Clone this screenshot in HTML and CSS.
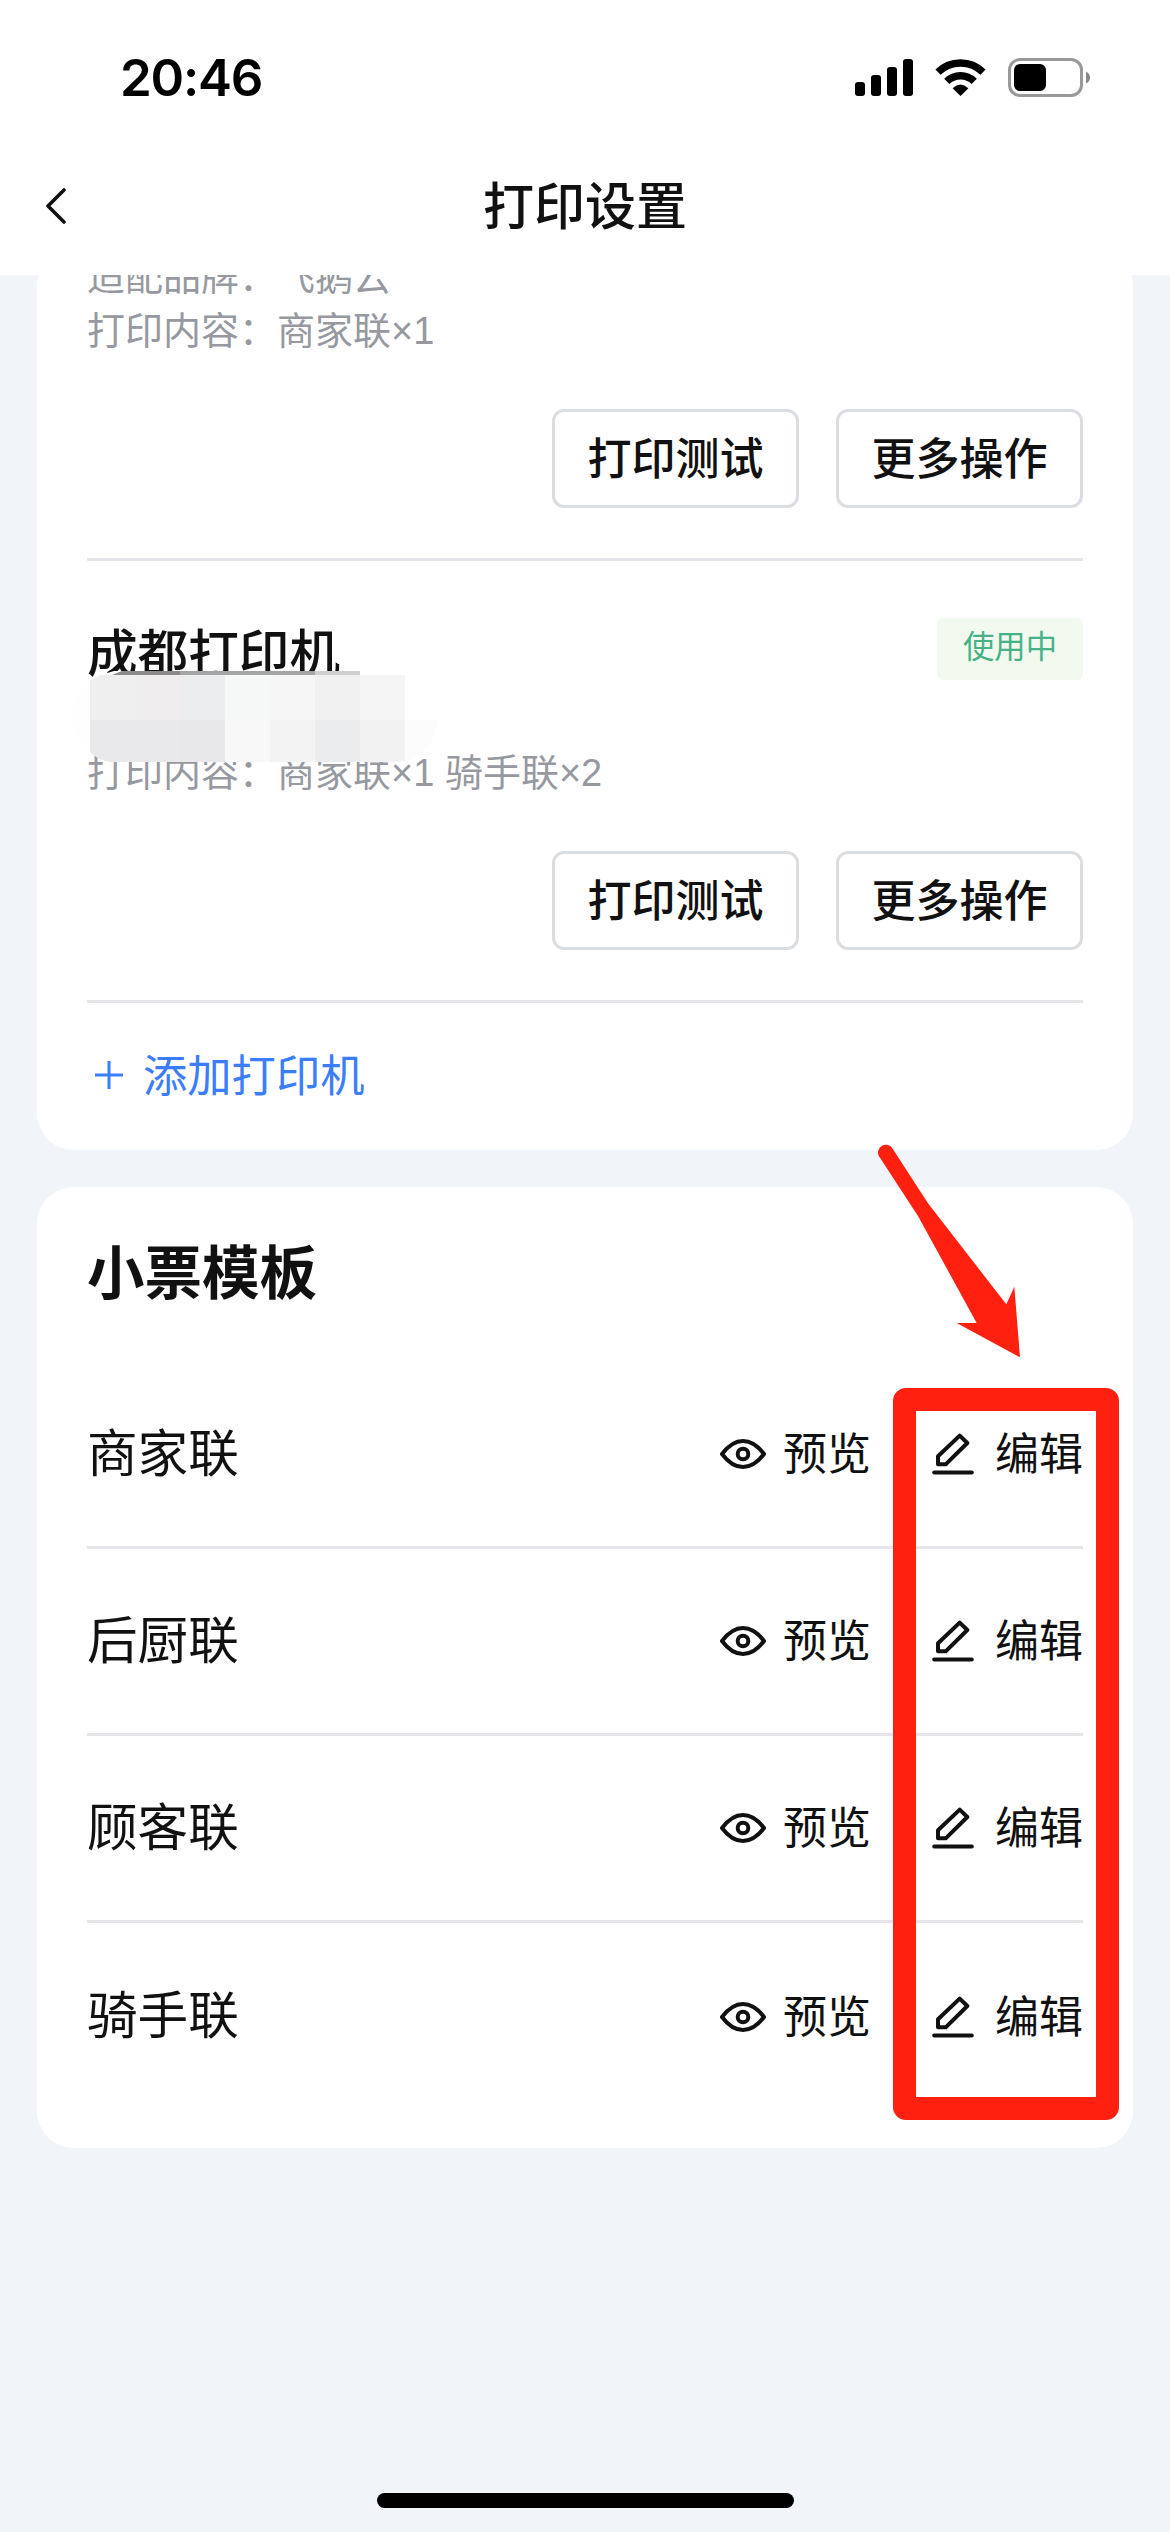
FILE: index.html
```html
<!DOCTYPE html>
<html lang="zh-CN">
<head>
<meta charset="utf-8">
<title>打印设置</title>
<link rel="stylesheet" href="styles.css">
</head>
<body>
<svg class="sprite" aria-hidden="true">
  <symbol id="eye" viewBox="0 0 46 30">
    <path d="M2 15C8 7 15 2 23 2s15 5 21 13c-6 8-13 13-21 13S8 23 2 15z" fill="none" stroke="#111" stroke-width="4" stroke-linejoin="round"/>
    <circle cx="23" cy="15" r="5.3" fill="none" stroke="#111" stroke-width="4"/>
  </symbol>
  <symbol id="edit" viewBox="0 0 42 42">
    <path d="M6 23.3L27.7 2.6L35.3 10L13.7 31.3H6z" fill="none" stroke="#111" stroke-width="4" stroke-linejoin="round"/>
    <path d="M2.2 39.6H39.8" stroke="#111" stroke-width="4" stroke-linecap="round"/>
  </symbol>
</svg>
<div class="screen">
  <header class="header">
    <div class="status">
      <span class="time">20:46</span>
      <div class="indicators">
        <svg class="signal" width="58" height="38" viewBox="0 0 58 38">
          <rect x="0" y="23" width="10" height="14" rx="3"/>
          <rect x="16" y="16" width="10" height="21" rx="3"/>
          <rect x="32" y="8" width="10" height="29" rx="3"/>
          <rect x="48" y="0" width="10" height="37" rx="3"/>
        </svg>
        <svg class="wifi" width="51" height="38" viewBox="0 0 51 38">
          <path d="M3 13.2A32 32 0 0 1 48 13.2" fill="none" stroke="#000" stroke-width="7.4"/>
          <path d="M11.8 22.3A19.5 19.5 0 0 1 39.2 22.3" fill="none" stroke="#000" stroke-width="7.4"/>
          <path d="M25.5 37L17.6 29.2Q25.5 22 33.4 29.2z"/>
        </svg>
        <svg class="battery" width="83" height="40" viewBox="0 0 83 40">
          <rect x="1.5" y="1.5" width="72" height="36" rx="10.5" fill="none" stroke="#999" stroke-width="3"/>
          <rect x="6" y="6" width="32" height="27" rx="6"/>
          <path d="M78 13.5Q82 15.5 82 19.5T78 25.5z" fill="#888"/>
        </svg>
      </div>
    </div>
    <div class="nav">
      <svg class="back" width="22" height="36" viewBox="0 0 22 36"><path d="M19 2L3 18L19 34" fill="none" stroke="#111" stroke-width="3.6" stroke-linecap="round" stroke-linejoin="round"/></svg>
      <h1 class="nav-title">打印设置</h1>
    </div>
  </header>

  <main class="content">
    <section class="card printers">
      <article class="printer">
        <p class="detail">适配品牌：飞鹅云</p>
        <p class="detail">打印内容：商家联×1</p>
        <div class="buttons"><button class="btn">打印测试</button><button class="btn">更多操作</button></div>
      </article>
      <article class="printer">
        <div class="printer-head"><h2 class="printer-name">成都打印机</h2><span class="badge">使用中</span></div>
        <p class="detail">打印内容：商家联×1 骑手联×2</p>
        <div class="buttons"><button class="btn">打印测试</button><button class="btn">更多操作</button></div>
        <svg class="mosaic" width="370" height="92" viewBox="0 0 370 92">
          <path d="M44 0H290V4H335V50H367Q362 90 330 91H40Q2 80 2 45T44 0z" fill="#fefefe"/>
          <path d="M52 0H110V4H42z" fill="#8b8b8b"/>
          <path d="M110 0H245V4H110z" fill="#a5a5a5"/>
          <path d="M245 0H290V4H245z" fill="#cfcfcf"/>
          <path d="M20 9L31 4H65V49H20z" fill="#eeefee"/>
          <path d="M65 4H110V49H65z" fill="#efeded"/>
          <path d="M110 4H155V49H110z" fill="#ecedef"/>
          <path d="M155 4H200V49H155z" fill="#f6f8f7"/>
          <path d="M200 4H245V49H200z" fill="#f5f6f5"/>
          <path d="M245 4H290V49H245z" fill="#f1f0f0"/>
          <path d="M290 4H335V49H290z" fill="#f5f5f5"/>
          <path d="M20 49H65V91H42Q29 90 20 81z" fill="#e9e9ec"/>
          <path d="M65 49H110V91H65z" fill="#e9e9eb"/>
          <path d="M110 49H155V91H110z" fill="#e8e8eb"/>
          <path d="M155 49H200V91H155z" fill="#f8f8f8"/>
          <path d="M200 49H245V91H200z" fill="#f4f3f3"/>
          <path d="M245 49H290V91H245z" fill="#ebeced"/>
          <path d="M290 49H335V90L325 91H290z" fill="#f1f2f1"/>
          <path d="M335 49H368Q364 82 335 90z" fill="#fcfcfc"/>
        </svg>
      </article>
      <div class="add">
        <svg width="28" height="28" viewBox="0 0 28 28"><path d="M0 14H28M14 0V28" stroke="#3b7dff" stroke-width="3"/></svg>
        <span class="add-text">添加打印机</span>
      </div>
    </section>

    <section class="card templates">
      <h2 class="section-title">小票模板</h2>
      <div class="row"><span class="label">商家联</span><span class="action"><svg class="eye"><use href="#eye"/></svg><span>预览</span></span><span class="action"><svg class="edit"><use href="#edit"/></svg><span>编辑</span></span></div>
      <div class="row"><span class="label">后厨联</span><span class="action"><svg class="eye"><use href="#eye"/></svg><span>预览</span></span><span class="action"><svg class="edit"><use href="#edit"/></svg><span>编辑</span></span></div>
      <div class="row"><span class="label">顾客联</span><span class="action"><svg class="eye"><use href="#eye"/></svg><span>预览</span></span><span class="action"><svg class="edit"><use href="#edit"/></svg><span>编辑</span></span></div>
      <div class="row"><span class="label">骑手联</span><span class="action"><svg class="eye"><use href="#eye"/></svg><span>预览</span></span><span class="action"><svg class="edit"><use href="#edit"/></svg><span>编辑</span></span></div>
      <div class="highlight"></div>
      <svg class="arrow" width="145" height="216" viewBox="0 0 435 648">
        <path d="M3 37A22 22 0 0 1 44 14L150 178L385 481L409 428L426 640L236 537H296L120 216L5 40z" fill="#ff2010"/>
      </svg>
    </section>
  </main>
  <div class="home-bar"></div>
</div>
</body>
</html>
```
FILE: styles.css
```css
* { box-sizing: border-box; margin: 0; padding: 0; }
body { background: #f1f5fa; color: #111; font-family: "Liberation Sans", "Noto Sans CJK SC", sans-serif; }
.sprite { display: none; }
svg { display: block; flex: none; }
.screen { position: relative; width: 1170px; height: 2532px; overflow: hidden; display: flex; flex-direction: column; }

.header { height: 275px; flex: none; background: #fff; }
.status { height: 137px; padding: 18px 79px 0 120px; display: flex; align-items: center; justify-content: space-between; }
.time { font: 600 51px/60px Inter, sans-serif; color: #000; letter-spacing: -1.2px; }
.indicators { display: flex; align-items: flex-start; }
.signal, .wifi { margin-top: 1px; }
.wifi { margin-left: 22px; }
.battery { margin-left: 22px; }
.nav { height: 138px; display: grid; grid-template-columns: 45px 1fr 45px; align-items: center; }
.back { margin-left: 45px; }
.nav-title { text-align: center; font-size: 51px; line-height: 134px; padding-top: 4px; font-weight: 500; }

.content { flex: 1; overflow: hidden; padding: 0 37px; }
.card { position: relative; background: #fff; border-radius: 37px; padding: 0 50px; }
.printers { margin-top: -26px; height: 901px; }
.printer { position: relative; border-bottom: 3px solid #e5e6eb; padding-bottom: 50px; }
.detail { font-size: 38px; line-height: 52px; padding-top: 2px; color: #96999f; white-space: pre; }
.buttons { display: flex; justify-content: flex-end; gap: 37px; margin-top: 52px; }
.btn { width: 247px; height: 99px; padding-top: 2px; border: 3px solid #dadde2; border-radius: 12px; background: #fff; color: #111; font: 500 44px/90px "Liberation Sans", "Noto Sans CJK SC", sans-serif; }
.printer-head { display: flex; justify-content: space-between; padding-top: 57px; height: 184px; }
.printer-name { font-size: 50.6px; line-height: 70px; padding-top: 2px; font-weight: 500; }
.badge { width: 146px; height: 62px; border-radius: 6px; background: #f2faf0; color: #48b286; font-size: 31.4px; line-height: 60px; text-align: center; }
.mosaic { position: absolute; left: -17px; top: 110px; }
.add { display: flex; align-items: center; gap: 20px; height: 144px; padding-left: 8px; font-size: 44.3px; line-height: 64px; color: #3b7dff; }
.add-text { padding-top: 3px; }

.templates { margin-top: 37px; height: 961px; }
.section-title { font-size: 57.5px; line-height: 80px; padding: 47px 0 48px; font-weight: 600; }
.row { display: flex; align-items: center; height: 187px; border-bottom: 3px solid #e5e6eb; }
.row:nth-of-type(4) { border-bottom: 0; }
.label { flex: 1; font-size: 50.6px; line-height: 70px; padding-top: 1px; }
.action { display: flex; align-items: center; font-size: 44px; line-height: 64px; }
.action span { padding-top: 2px; }
.action + .action { margin-left: 61px; }
.eye { width: 46px; height: 30px; margin-right: 17px; }
.edit { width: 42px; height: 42px; margin-right: 21px; }
.highlight { position: absolute; left: 856px; top: 201px; width: 226px; height: 732px; border: 23px solid #ff2010; border-radius: 13px; }
.arrow { position: absolute; left: 841px; top: -43px; }
.home-bar { position: absolute; left: 377px; top: 2493px; width: 417px; height: 15px; border-radius: 8px; background: #000; }
```
